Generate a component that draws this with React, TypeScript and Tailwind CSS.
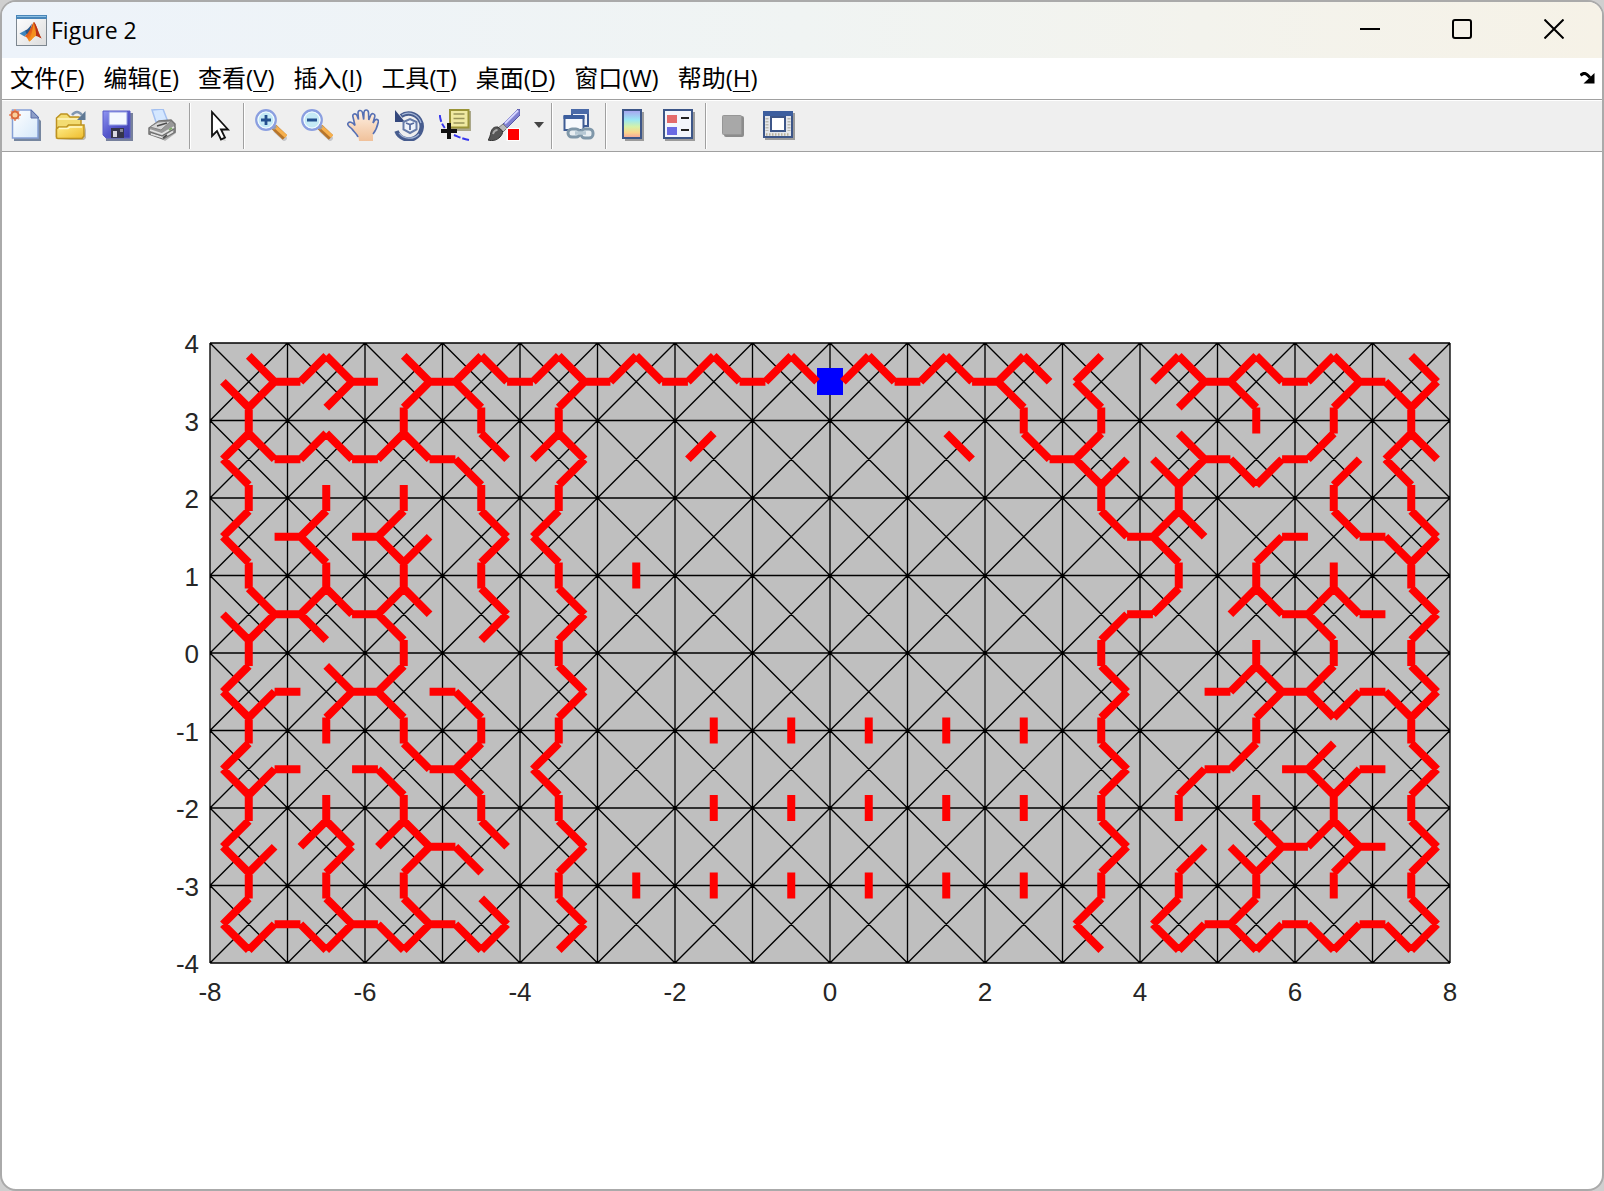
import type { ReactNode } from "react";

/* Menu bar entries: caption and the access key shown underlined. */
const MENUS: [string, string][] = [
  ["文件", "F"],
  ["编辑", "E"],
  ["查看", "V"],
  ["插入", "I"],
  ["工具", "T"],
  ["桌面", "D"],
  ["窗口", "W"],
  ["帮助", "H"],
];

/*
 * The mesh splits every unit cell into four triangles. Each string lists the
 * links between triangle centroids of one cell:
 * a top-right, b right-bottom, c left-bottom, d left-top,
 * e to the cell on the right, f to the cell below.
 */
const LINKS: string[][] = [
  ["abcef", "abde", "abef", "acdef", "abdef", "ade", "ade", "ad", "ade", "ade", "acdf", "cdf", "abde", "acdef", "abdef", "abcf"],
  ["acdef", "adef", "adef", "acf", "abdf", "", "d", "", "", "a", "ae", "bcdf", "abcef", "bce", "bdf", "acdf"],
  ["cdef", "cdef", "bcdf", "abf", "cdf", "f", "", "", "", "", "", "ae", "acdf", "bef", "aef", "abcf"],
  ["abcef", "acde", "acdf", "ab", "abf", "", "", "", "", "", "", "bef", "d", "adef", "acdef", "abf"],
  ["bcdef", "abef", "cdef", "cf", "abf", "", "f", "f", "f", "f", "f", "abf", "e", "abdef", "bcde", "abcf"],
  ["bcdef", "ef", "acef", "cdf", "cdf", "", "f", "f", "f", "f", "f", "abf", "bef", "def", "bcdef", "abf"],
  ["bcdf", "abdf", "abdef", "ac", "abf", "f", "f", "f", "f", "f", "f", "abf", "bf", "abcef", "abdef", "abf"],
  ["bcde", "abce", "abce", "abc", "ab", "", "", "", "", "", "", "cd", "bcde", "bcde", "bce", "abc"],
];

const UNIT = 77.5;
const X0 = 210;
const Y0 = 343;
const THIRD = UNIT / 3;

function linkPath() {
  let d = "";
  LINKS.forEach((row, r) =>
    row.forEach((cell, c) => {
      const x = X0 + UNIT * (c + 0.5);
      const y = Y0 + UNIT * (r + 0.5);
      const top = [x, y - THIRD];
      const right = [x + THIRD, y];
      const bottom = [x, y + THIRD];
      const left = [x - THIRD, y];
      const ends: Record<string, number[][]> = {
        a: [top, right],
        b: [right, bottom],
        c: [left, bottom],
        d: [left, top],
        e: [right, [x + UNIT - THIRD, y]],
        f: [bottom, [x, y + UNIT - THIRD]],
      };
      for (const key of cell) {
        const [p, q] = ends[key];
        d += `M${p[0]} ${p[1]}L${q[0]} ${q[1]}`;
      }
    })
  );
  return d;
}

function meshPath() {
  let d = "";
  for (let c = 0; c <= 16; c++) d += `M${X0 + c * UNIT} ${Y0}v${8 * UNIT}`;
  for (let r = 0; r <= 8; r++) d += `M${X0} ${Y0 + r * UNIT}h${16 * UNIT}`;
  for (let r = 0; r < 8; r++)
    for (let c = 0; c < 16; c++) {
      const x = X0 + c * UNIT;
      const y = Y0 + r * UNIT;
      d += `M${x} ${y}l${UNIT} ${UNIT}M${x + UNIT} ${y}l${-UNIT} ${UNIT}`;
    }
  return d;
}

function Plot() {
  return (
    <svg viewBox="2 152 1600 1037" className="h-full w-full" role="img" aria-label="Triangle mesh">
      <rect x={X0} y={Y0} width={16 * UNIT} height={8 * UNIT} fill="#bfbfbf" />
      <path d={meshPath()} stroke="#000" strokeWidth="1.35" fill="none" />
      <rect x="817" y="368" width="26" height="27" fill="#0000ff" />
      <path d={linkPath()} stroke="#ff0000" strokeWidth="8" fill="none" />
      <g fill="#262626" fontSize="26" fontFamily='"Liberation Sans", Arial, sans-serif'>
        {[4, 3, 2, 1, 0, -1, -2, -3, -4].map((v) => (
          <text key={v} x="199" y={Y0 + (4 - v) * UNIT + 10} textAnchor="end">
            {v}
          </text>
        ))}
        {[-8, -6, -4, -2, 0, 2, 4, 6, 8].map((v) => (
          <text key={v} x={X0 + (v + 8) * UNIT} y="1001" textAnchor="middle">
            {v}
          </text>
        ))}
      </g>
    </svg>
  );
}

function Tool({ label, wide, children }: { label: string; wide?: boolean; children: ReactNode }) {
  return (
    <button
      type="button"
      aria-label={label}
      className={wide ? "flex h-12 w-[52px] items-center justify-center pb-[2px]" : "flex h-12 w-[46px] items-center justify-center pb-[2px]"}
    >
      <svg viewBox="0 0 32 32" className="size-8" aria-hidden="true">
        {children}
      </svg>
    </button>
  );
}

function Separator() {
  return <div className="mx-[3px] h-[46px] w-[2px] border-l border-[#a0a0a0] bg-white" />;
}

function MatlabLogo() {
  return (
    <svg viewBox="0 0 31 31" className="size-[31px]" aria-hidden="true">
      <defs>
        <linearGradient id="logoBg" x1="0" y1="0" x2="1" y2="1">
          <stop offset="0" stopColor="#ffffff" />
          <stop offset="1" stopColor="#dcdcdc" />
        </linearGradient>
        <linearGradient id="logoFlame" x1="0" y1="0" x2="1" y2="1">
          <stop offset="0" stopColor="#8e2a10" />
          <stop offset=".45" stopColor="#e8641a" />
          <stop offset=".7" stopColor="#f7a51c" />
          <stop offset="1" stopColor="#b3280f" />
        </linearGradient>
      </defs>
      <rect x=".5" y=".5" width="30" height="30" fill="url(#logoBg)" stroke="#7d8790" />
      <rect x="0" y="0" width="31" height="4" fill="#4a86b8" />
      <rect x="1" y="1" width="29" height="1" fill="#8cc0e4" />
      <path d="M3.500 18.500 9 15.500 12 18 8.500 21.500Z" fill="#3f86bd" />
      <path d="M9 15.500c3-1 5-4 7-7l-2 8-3 3.500z" fill="#29598c" />
      <path d="M17.800 7C15 11 14 17 8.500 21.500c2 0 3 1.500 4.500 5 3-1 4-5 7-5.500 2 0 4 1.500 5.500 2.500C22.500 18 20 8 17.800 7Z" fill="url(#logoFlame)" />
      <path d="M17.800 7c-1 5-1 10-4.800 19.500 3-1 4-5 7-5.500C19 16 18.500 12 17.800 7Z" fill="#f4901e" />
      <path d="M17.800 7C20 8 22.500 18 25.500 23.500 24 22.500 22 21 20 21 20.500 16 19 11 17.800 7Z" fill="#b5301a" />
    </svg>
  );
}

function Magnifier({ plus }: { plus?: boolean }) {
  return (
    <>
      <path d="M20 21 31 31" stroke="#8d9099" strokeWidth="5" opacity=".4" />
      <path d="M19 18 30 28.500" stroke="#b7752a" strokeWidth="6.500" />
      <path d="M20 17.500 31 27.500" stroke="#f6b04e" strokeWidth="3.500" />
      <path d="m16.500 15.500 4 4" stroke="#9b9da6" strokeWidth="4" />
      <circle cx="11" cy="11" r="9.700" fill="#c4eaf6" stroke="#8b9fe0" strokeWidth="2.400" />
      <circle cx="11" cy="11" r="8" fill="none" stroke="#f4fbff" strokeWidth="1.200" />
      <path d="M6 11h10" stroke="#24518f" strokeWidth="2.800" />
      {plus && <path d="M11 6v10" stroke="#24518f" strokeWidth="2.800" />}
    </>
  );
}

function Toolbar() {
  return (
    <div role="toolbar" className="mt-px flex h-[50px] shrink-0 items-center bg-[#efefef]">
      <Tool label="新建图窗">
        <defs>
          <linearGradient id="paper" x1="0" y1="0" x2="1" y2="1">
            <stop offset="0" stopColor="#ffffff" />
            <stop offset="1" stopColor="#d5e8fa" />
          </linearGradient>
        </defs>
        <path d="M5 5h20l7 7v20H5Z" fill="#76869f" />
        <path d="M3.500 1h18.500l7 7v21H3.500Z" fill="url(#paper)" stroke="#86a0d6" strokeWidth="1.500" />
        <path d="m22 1 8 8h-8Z" fill="#8d9ec8" stroke="#5c6ea8" />
        <path d="M6 0v12M0 6h12M2 2l8 8M10 2l-8 8" stroke="#e8a084" strokeWidth="2" />
        <circle cx="6" cy="6" r="3.500" fill="#f9cf9c" stroke="#d9683c" strokeWidth="2" />
      </Tool>
      <Tool label="打开文件">
        <defs>
          <linearGradient id="folder" x1="0" y1="0" x2="1" y2="1">
            <stop offset="0" stopColor="#fff08e" />
            <stop offset="1" stopColor="#efbc2c" />
          </linearGradient>
        </defs>
        <path d="M4 31h25l2-2V17l-3 12Z" fill="#9b9487" opacity=".6" />
        <path d="M1.500 28V9L6 5h6l3 3h9l2 2v8" fill="#f3dc72" stroke="#bd9220" strokeWidth="1.500" />
        <path d="M2.500 10h22" stroke="#fbf0b0" strokeWidth="2" />
        <path d="M1.500 29V20l2-2h8l2-2h15.500V27l-2 2.500H3Z" fill="url(#folder)" stroke="#bd9220" strokeWidth="1.500" />
        <path d="M4 19.500h9l2-1.500h12" fill="none" stroke="#fff9c8" strokeWidth="1.500" />
        <path d="M17 6c3-4 7-4 10 0" fill="none" stroke="#8197b0" strokeWidth="2.500" />
        <path d="M30.500 2v9H22Z" fill="#5f7894" />
      </Tool>
      <Tool label="保存图窗">
        <defs>
          <linearGradient id="disk" x1="0" y1="0" x2="1" y2="1">
            <stop offset="0" stopColor="#9196f2" />
            <stop offset=".5" stopColor="#5658cc" />
            <stop offset="1" stopColor="#3a3aa8" />
          </linearGradient>
        </defs>
        <path d="M4 4h28v28H5Z" fill="#76809c" />
        <path d="M2 2h27v27H5l-3-3Z" fill="url(#disk)" stroke="#5a5cc8" />
        <path d="M8 3h18v13H8Z" fill="#f4f8ff" stroke="#8d98e2" />
        <path d="M10 19h13v10H10Z" fill="#35354a" />
        <path d="M12 22h4v6h-4Z" fill="#d8d8e0" />
        <path d="M19 20h3v3h-3Z" fill="#888898" />
      </Tool>
      <Tool label="打印图窗">
        <path d="M6 24 18 32l11-8v-6Z" fill="#777" opacity=".5" />
        <path d="m5 1 11-1 5 13H9Z" fill="#d4e7ff" stroke="#a4c0f0" strokeWidth="1.500" />
        <path d="M2 19 12 12l12-1 4 4v8L16 30 2 25Z" fill="#989898" stroke="#747474" strokeWidth="1.500" />
        <path d="m3 18 8-5 13-1-10 9Z" fill="#d6d6d6" stroke="#858585" />
        <path d="m3 21 12 4 12-7M4 25l12 3.500 10-6" fill="none" stroke="#e2e2e2" strokeWidth="1.800" />
        <path d="m3 23 12 4 12-7" fill="none" stroke="#6a6a6a" strokeWidth="1" />
        <path d="m10 17 10-3M16 29l4-3" stroke="#4c4c4c" strokeWidth="1.600" />
        <path d="m22 21 3-2" stroke="#7fae68" strokeWidth="2" />
      </Tool>
      <Separator />
      <Tool label="编辑绘图">
        <path d="m14 28 3-3 4 6 4 1-6-11 7-1Z" fill="#999" opacity=".45" />
        <path d="M11 3v24l5-5 4 8.500 4-2-4-8h7Z" fill="#fff" stroke="#111" strokeWidth="1.800" />
      </Tool>
      <Separator />
      <Tool label="放大">
        <Magnifier plus />
      </Tool>
      <Tool label="缩小">
        <Magnifier />
      </Tool>
      <Tool label="平移">
        <defs>
          <linearGradient id="hand" x1="0" y1="0" x2="0" y2="1">
            <stop offset="0" stopColor="#fff2e6" />
            <stop offset="1" stopColor="#f0c19a" />
          </linearGradient>
        </defs>
        <path
          d="M12 32C12 26 8 24 5 20 3 18 0 17 .8 14.500 2 12 5.500 13 8 16.500L6 8C5 5 8.500 3.500 10 6.500l1.500 4L11 4c0-3 3.500-3.500 4.500-.5l1.200 7L17 3.500c.5-3.500 4-3 4.500 0l.3 7.500 2-5c1.500-2.500 4.500-1 4 1.500L26 14l2-3c2-1.500 4 0 3.200 2.500C30 19 28.500 22 26 25v7Z"
          fill="url(#hand)"
        />
        <path
          d="M11 28C10 25 7 23 5 20 3 18 0 17 .8 14.500 2 12 5.500 13 8 16.500L6 8C5 5 8.500 3.500 10 6.500l1.500 4L11 4c0-3 3.500-3.500 4.500-.5l1.200 7L17 3.500c.5-3.500 4-3 4.500 0l.3 7.500 2-5c1.500-2.500 4.500-1 4 1.500L26 14l2-3c2-1.500 4 0 3.200 2.500C30 19 28.500 22 26 25"
          fill="none"
          stroke="#5670b4"
          strokeWidth="1.600"
        />
      </Tool>
      <Tool label="三维旋转">
        <path d="M8 7a13 13 0 1 1-4.500 15" fill="none" stroke="#475c8e" strokeWidth="4.500" />
        <path d="M9 6a13 13 0 0 1 19 8M6 24a13 13 0 0 0 20 1" fill="none" stroke="#a3b5d6" strokeWidth="1.200" />
        <path d="M2 1v12h10Z" fill="#33477c" />
        <path d="m10.500 13 6.500-3 6.500 3v7.500l-6.500 3.500-6.500-3.500Z" fill="#eef3fa" stroke="#667ba8" strokeWidth="2" />
        <path d="m13 14 4 1.500 4-1.500M17 15.500V21" fill="none" stroke="#5a6ea0" strokeWidth="1.800" />
      </Tool>
      <Tool label="数据游标">
        <path d="M12 2h20v20H12Z" fill="#aaa78a" />
        <path d="M11 1h18.500v17.500H11Z" fill="#efe9a2" stroke="#9a9438" strokeWidth="2" />
        <path d="M14.500 5h11M14.500 9.500h11M14.500 14h11" stroke="#98945a" strokeWidth="1.500" />
        <path d="M.8 6c.4 5 2 9 5 13M15 26c5 2 9 4 15 5" fill="none" stroke="#3636ee" strokeWidth="2" strokeDasharray="7 2" />
        <path d="M10 14v16M2 22h16" stroke="#111" strokeWidth="4" />
      </Tool>
      <Tool label="刷亮数据" wide>
        <path d="M30 0 15 15l4 4L32 6V0Z" fill="#8080d0" stroke="#5656a8" />
        <path d="M30 1.500 17 14.500" stroke="#d4d4ff" strokeWidth="2" />
        <path d="m15 15 4 4-4 4-5-4Z" fill="#b9b9b9" stroke="#777" />
        <path d="M10 18c-4-.5-6 1.500-7 5-.8 4-1.500 6-3 8 5 1.500 9 0 12-3 2-2 2.800-4 2.500-6Z" fill="#565656" stroke="#333" />
        <path d="M5 25c1-3 2.500-4 4.500-4" fill="none" stroke="#aaa" strokeWidth="1.800" />
        <rect x="18.500" y="19" width="13.500" height="13" fill="#fff" />
        <rect x="20" y="20" width="11" height="11" fill="#ff0000" />
      </Tool>
      <button type="button" aria-label="刷亮选项" className="flex h-12 w-[18px] items-center justify-center pb-[2px]">
        <svg viewBox="0 0 10 6" className="h-[6px] w-[10px]" aria-hidden="true">
          <path d="M0 0h10L5 6Z" fill="#444" />
        </svg>
      </button>
      <Separator />
      <Tool label="链接绘图">
        <path d="M9 2h16v15H9Z" fill="#eef2fa" stroke="#3f5c94" strokeWidth="2" />
        <path d="M8 0h18v5H8Z" fill="#4a6aa8" />
        <path d="M1.500 8h19v13h-19Z" fill="#f7f9fd" stroke="#3f5c94" strokeWidth="2" />
        <path d="M.5 6h21v4H.5Z" fill="#3c5e9e" />
        <rect x="5" y="20" width="12" height="8" rx="4" fill="#e8eef2" stroke="#7f97a9" strokeWidth="3" />
        <rect x="18" y="20" width="12" height="9" rx="4" fill="#e8eef2" stroke="#7f97a9" strokeWidth="3" />
        <path d="M12 24h11" stroke="#b6c8d4" strokeWidth="3.500" />
      </Tool>
      <Separator />
      <Tool label="插入颜色栏">
        <defs>
          <linearGradient id="bar" x1="0" y1="0" x2="0" y2="1">
            <stop offset="0" stopColor="#a9a0f0" />
            <stop offset=".35" stopColor="#99e8f4" />
            <stop offset=".6" stopColor="#d6f2a8" />
            <stop offset=".8" stopColor="#fbd78c" />
            <stop offset="1" stopColor="#f5a39a" />
          </linearGradient>
        </defs>
        <rect x="8" y="3" width="19" height="29" fill="#9b9b9b" />
        <rect x="6" y="1" width="18" height="28" fill="url(#bar)" stroke="#3d5688" strokeWidth="2" />
      </Tool>
      <Tool label="插入图例">
        <rect x="2" y="3" width="30" height="29" fill="#9b9b9b" />
        <rect x="1" y="1" width="28" height="28" fill="#f3f6fc" stroke="#3d5688" strokeWidth="2" />
        <rect x="4" y="6" width="10" height="8" fill="#e36a6a" />
        <rect x="4" y="18" width="10" height="8" fill="#6a6ae3" />
        <path d="M18 9h8M18 21h8" stroke="#222" strokeWidth="2" />
      </Tool>
      <Separator />
      <Tool label="隐藏绘图工具">
        <rect x="7" y="7" width="20" height="21" rx="2" fill="#8c8c8c" />
        <rect x="5.500" y="6.500" width="19" height="19" rx="1" fill="#a8a8a8" stroke="#969696" />
      </Tool>
      <Tool label="显示绘图工具">
        <rect x="2" y="4" width="30" height="27" fill="#9b9b9b" />
        <rect x="1" y="3" width="28" height="25" fill="#e4e6ea" stroke="#3d5688" strokeWidth="2" />
        <rect x="0" y="2" width="30" height="5" fill="#3c5e9e" />
        <rect x="8" y="8" width="14" height="14" fill="#fff" stroke="#3d5688" strokeWidth="2" />
        <path d="M4 9v13M26 9v13" stroke="#b9b9b0" strokeWidth="3" strokeDasharray="1.500 1.500" />
        <path d="M3 25.500h24" stroke="#b9b29c" strokeWidth="2.500" strokeDasharray="1.500 1.500" />
      </Tool>
    </div>
  );
}

function CaptionButton({ label, children }: { label: string; children: ReactNode }) {
  return (
    <button type="button" aria-label={label} className="flex h-full w-[92px] items-center justify-center pb-[2px]">
      <svg viewBox="0 0 20 20" className="size-5" fill="none" stroke="#000" strokeWidth="2" aria-hidden="true">
        {children}
      </svg>
    </button>
  );
}

export default function App() {
  return (
    <div className="h-screen bg-[#cfcfcf]">
      <div className='flex h-full flex-col overflow-hidden rounded-2xl border-2 border-[#aaaaaa] bg-white font-["Open_Sans","Noto_Sans_CJK_SC",sans-serif] text-black'>
        <header className="flex h-14 shrink-0 items-center bg-linear-to-r from-[#edf3fa] via-[#f0f4f3] to-[#f6f2e7] pr-[2px] pl-[14px]">
          <MatlabLogo />
          <h1 className="ml-1 flex-1 text-[23px] leading-8">Figure 2</h1>
          <CaptionButton label="最小化">
            <path d="M0 10h20" />
          </CaptionButton>
          <CaptionButton label="最大化">
            <rect x="1" y="1" width="18" height="18" rx="2" />
          </CaptionButton>
          <CaptionButton label="关闭">
            <path d="m.5.5 19 19m0-19-19 19" />
          </CaptionButton>
        </header>
        <nav className="flex h-[42px] shrink-0 items-center gap-[19px] border-b border-[#a0a0a0] pr-[7px] pb-[2px] pl-2 text-[24px] leading-8">
          {MENUS.map(([name, key]) => (
            <button key={key} type="button" className="whitespace-nowrap">
              {name}(<span className="underline decoration-1 underline-offset-4">{key}</span>)
            </button>
          ))}
          <button type="button" aria-label="停靠" className="ml-auto">
            <svg viewBox="0 0 15 12" className="h-3 w-[15px]" aria-hidden="true">
              <path d="M.5 3.500C3 .5 5.500 1 7.500 3l2.500 2.500" fill="none" stroke="#000" strokeWidth="3" />
              <path d="M14.500 1v10.500h-11Z" fill="#000" />
            </svg>
          </button>
        </nav>
        <Toolbar />
        <main className="min-h-0 flex-1 border-t border-[#a0a0a0]">
          <Plot />
        </main>
      </div>
    </div>
  );
}
